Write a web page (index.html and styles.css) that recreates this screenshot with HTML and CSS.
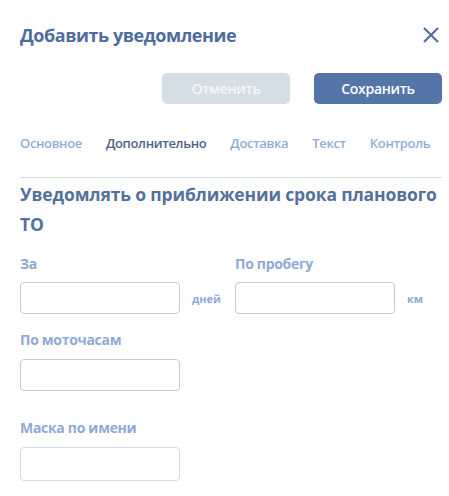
FILE: index.html
```html
<!DOCTYPE html>
<html lang="ru">
<head>
<meta charset="utf-8">
<link rel="stylesheet" href="styles.css">
</head>
<body>
<div class="dialog">
  <div class="head">
    <h1 class="title">Добавить уведомление</h1>
    <button class="close" aria-label="Закрыть">
      <svg width="16" height="16" viewBox="0 0 16 16"><path d="M1 1L15 15M15 1L1 15" stroke="#53709f" stroke-width="2.2" fill="none"/></svg>
    </button>
  </div>
  <div class="actions">
    <button class="btn btn-cancel">Отменить</button>
    <button class="btn btn-save">Сохранить</button>
  </div>
  <nav class="tabs">
    <span class="tab">Основное</span>
    <span class="tab active">Дополнительно</span>
    <span class="tab">Доставка</span>
    <span class="tab">Текст</span>
    <span class="tab">Контроль</span>
  </nav>
  <h2 class="section"><span class="nowrap">Уведомлять о приближении срока планового</span> ТО</h2>
  <div class="row">
    <div class="field">
      <label class="label">За</label>
      <div class="inline"><input class="input" type="text"><span class="unit">дней</span></div>
    </div>
    <div class="field">
      <label class="label">По пробегу</label>
      <div class="inline"><input class="input" type="text"><span class="unit">км</span></div>
    </div>
  </div>
  <div class="field f2">
    <label class="label">По моточасам</label>
    <div class="inline"><input class="input" type="text"></div>
  </div>
  <div class="field f3">
    <label class="label">Маска по имени</label>
    <div class="inline"><input class="input light" type="text"></div>
  </div>
</div>
</body>
</html>
```
FILE: styles.css
```css
* { box-sizing: border-box; }
html, body { margin: 0; padding: 0; background: #fff; }
body { font-family: "Open Sans", "Noto Sans", sans-serif; }
.dialog { padding: 20px 7px 0 20px; }
.head { display: flex; align-items: center; justify-content: space-between; height: 30px; }
.title { margin: 0; font-size: 18px; font-weight: 700; color: #4f6d9e; letter-spacing: -0.45px; }
.close { border: 0; background: none; padding: 0; width: 16px; height: 16px; margin-right: 3px; display: flex; }
.actions { display: flex; justify-content: flex-end; gap: 24px; margin-top: 23px; }
.btn { width: 128px; height: 31px; border: 0; border-radius: 5px; font-family: inherit; font-size: 14px; font-weight: 600; color: #fff; letter-spacing: -0.3px; }
.btn-cancel { background: #d3dee7; color: #f3f6f9; }
.btn-save { background: #5574a7; }
.tabs { display: flex; gap: 24px; margin-top: 29px; height: 20px; align-items: center; border-bottom: 1px solid #d7dce2; box-sizing: content-box; padding-bottom: 24px; }
.tab { font-size: 13px; font-weight: 600; color: #93acd6; letter-spacing: -0.35px; }
.tab.active { color: #4d6388; }
.section { margin: 1px 0 0; font-size: 17.5px; font-weight: 700; line-height: 30px; color: #53709f; letter-spacing: -0.15px; }
.nowrap { white-space: nowrap; }
.row { display: grid; grid-template-columns: 215px 1fr; margin-top: 15px; }
.field { display: flex; flex-direction: column; }
.label { font-size: 14px; font-weight: 700; line-height: 20px; color: #8eaad6; letter-spacing: -0.3px; }
.inline { display: flex; align-items: center; margin-top: 8px; }
.input { width: 160px; height: 32px; border: 1px solid #c6c9cf; border-radius: 4px; background: #fff; margin: 0; padding: 0 8px; }
.input.light { border-color: #d4dde3; height: 34px; }
.unit { margin-left: 12px; font-size: 11px; font-weight: 700; color: #8eaad6; }
.f2 { margin-top: 16px; }
.f2 .inline { margin-top: 9px; }
.f3 { margin-top: 27px; }
.f3 .inline { margin-top: 9px; }
```
